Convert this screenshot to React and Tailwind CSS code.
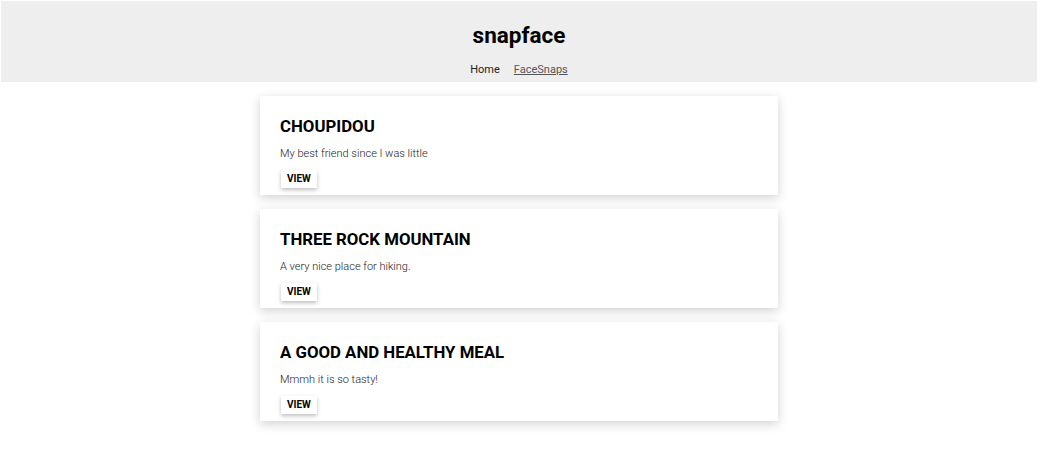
import React from 'react';

const snaps = [
  { title: 'Choupidou', description: 'My best friend since I was little' },
  { title: 'Three Rock Mountain', description: 'A very nice place for hiking.' },
  { title: 'A good and healthy meal', description: 'Mmmh it is so tasty!' }
];

const FaceSnap = ({ title, description }) => (
  <div className="bg-white shadow-[0_3px_10px_rgba(0,0,0,0.18)] px-5 pt-[20px] pb-[6px]">
    <h2 className="text-[16.8px] leading-[20px] font-bold uppercase text-black">{title}</h2>
    <p className="mt-[11px] text-[11px] leading-[13px] font-light text-[#222]">{description}</p>
    <button className="mt-[10px] ml-px h-[18px] px-[6px] text-[10px] font-bold leading-[18px] text-black bg-white shadow-[0_2px_4px_rgba(0,0,0,0.25)]">
      VIEW
    </button>
  </div>
);

const App = () => {
  return (
    <div className="min-h-screen bg-white font-['Roboto',sans-serif]">
      <header className="mx-px mt-px h-[81px] bg-[#eeeeee] flex flex-col items-center">
        <h1 className="mt-[21px] text-[22.5px] leading-[26px] font-bold text-black">snapface</h1>
        <nav className="mt-[15px] flex gap-[14px] text-[11px] leading-[13px]">
          <a className="text-[#222]">Home</a>
          <a className="text-[#555] underline">FaceSnaps</a>
        </nav>
      </header>
      <main className="w-[518px] mx-auto mt-[14px] flex flex-col gap-[14px]">
        {snaps.map((snap, index) => (
          <FaceSnap key={index} {...snap} />
        ))}
      </main>
    </div>
  );
};

export default App;
